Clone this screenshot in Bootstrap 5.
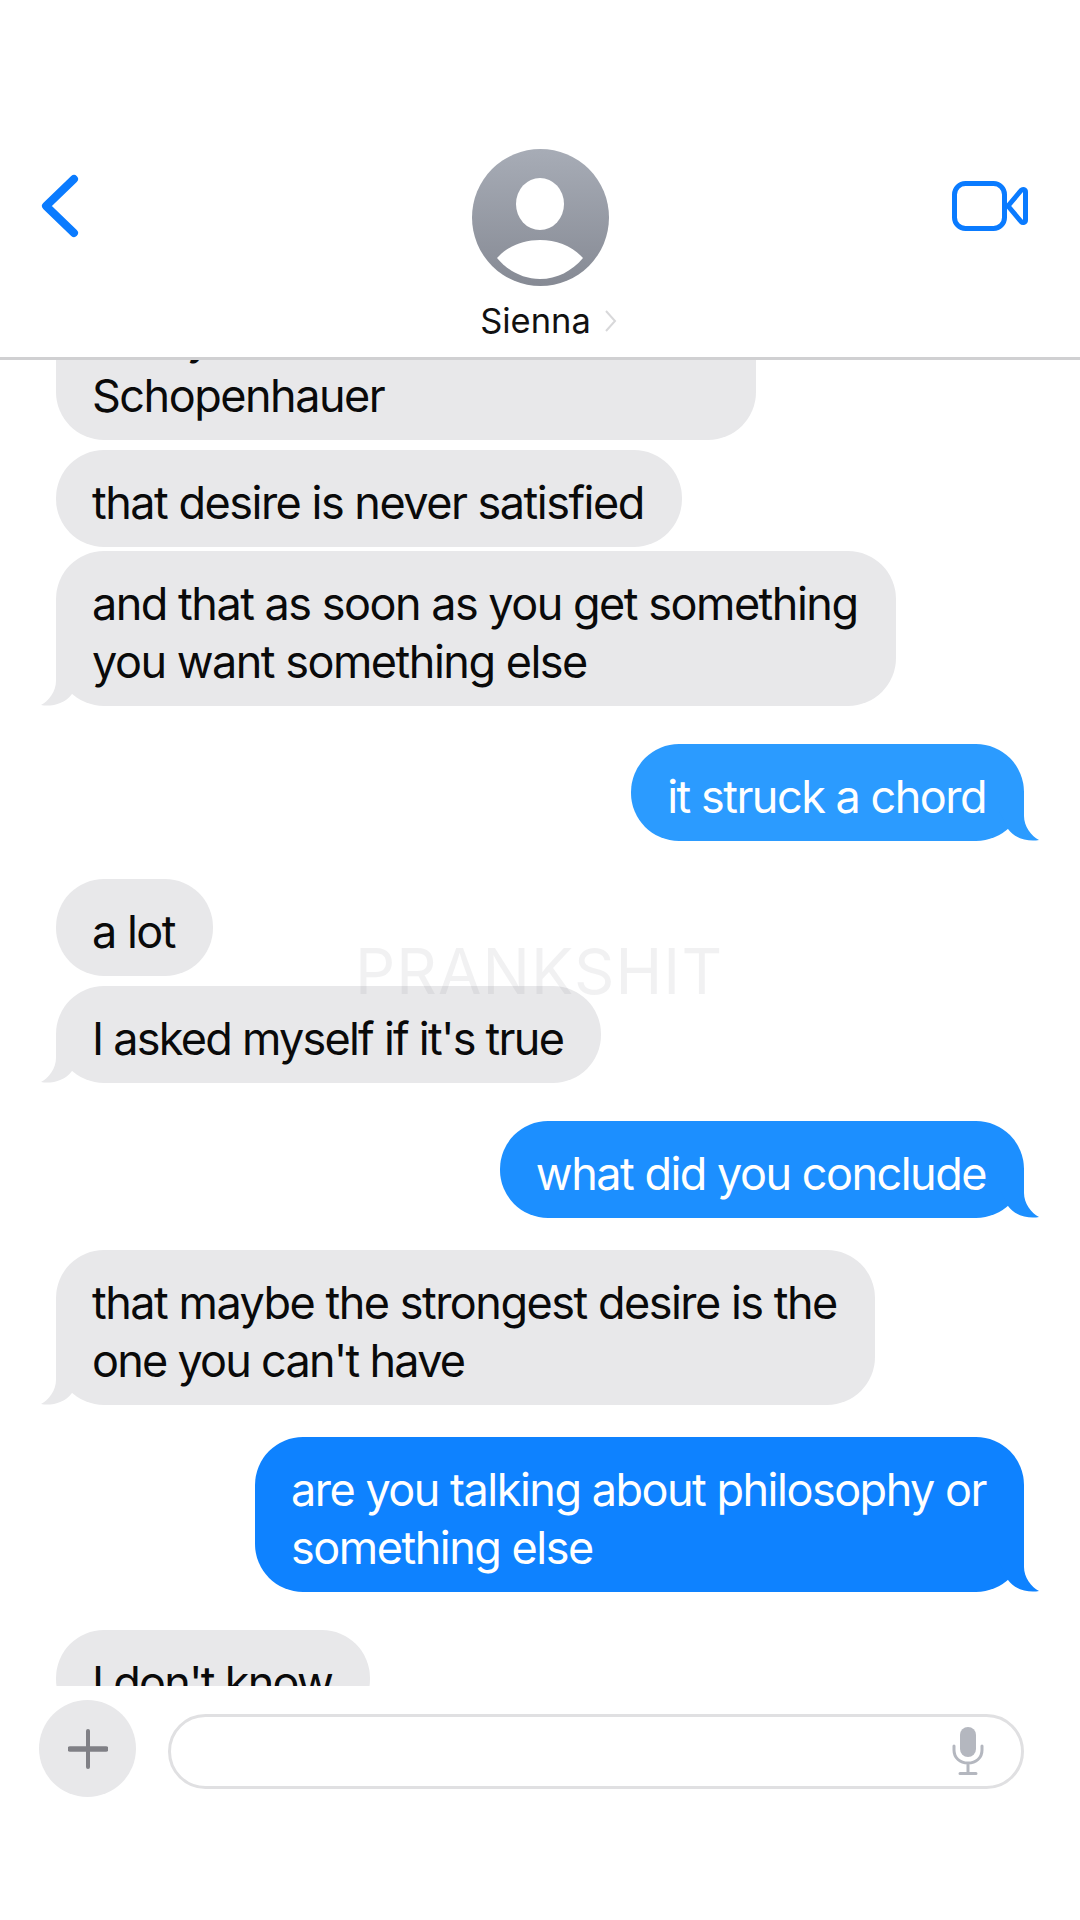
<!DOCTYPE html>
<html>
<head>
    <meta charset="UTF-8">
    <title>Sienna</title>
    <link href="https://cdn.jsdelivr.net/npm/bootstrap@5.3.0/dist/css/bootstrap.min.css" rel="stylesheet">
    <style>
        html, body {
            background-color: #fff;
        }
        .phone-screen {
            width: 1080px;
            height: 1920px;
            overflow: hidden;
            position: relative;
            font-family: Inter, "Liberation Sans", sans-serif;
        }
        .chat-head {
            height: 360px;
            padding-top: 149px;
            border-bottom: 3px solid #d0d0d2;
        }
        .back-icon {
            left: 40px;
            top: 172px;
        }
        .video-icon {
            right: 50px;
            top: 178px;
        }
        .contact-pic {
            width: 137px;
            height: 137px;
        }
        .contact-name {
            font-size: 34.5px;
            line-height: 40px;
            margin-top: 15px;
            color: #111;
            padding-left: 17px;
            gap: 13px;
        }
        .thread {
            height: 1326px;
            overflow: hidden;
            padding: 0 56px;
        }
        .bubble {
            font-size: 45px;
            line-height: 58px;
            letter-spacing: -1.5px;
            padding: 24px 38px 15px 36px;
            border-radius: 48px;
            position: relative;
        }
        .bubble-in {
            background-color: #e8e8ea;
            color: #0a0a0a;
            align-self: flex-start;
        }
        .bubble-out {
            color: #fff;
            align-self: flex-end;
        }
        .snug { letter-spacing: -1.75px; }
        .blue-1 { background-color: #2b9bff; color: #fff; }
        .blue-2 { background-color: #1c8fff; color: #fff; }
        .blue-3 { background-color: #0e82ff; color: #fff; }
        .tail {
            position: absolute;
            bottom: 0;
            width: 40px;
            height: 50px;
        }
        .bubble-in .tail {
            left: -15px;
            color: #e8e8ea;
        }
        .bubble-out .tail {
            right: -15px;
            transform: scaleX(-1);
        }
        .blue-1 .tail { color: #2b9bff; }
        .blue-2 .tail { color: #1c8fff; }
        .blue-3 .tail { color: #0e82ff; }
        .gap-s { margin-top: 10px; }
        .gap-xs { margin-top: 4px; }
        .gap-m { margin-top: 32px; }
        .gap-l { margin-top: 38px; }
        .first-bubble {
            margin-top: -75px;
            width: 700px;
        }
        .composer {
            padding: 14px 56px 0 39px;
        }
        .add-btn {
            width: 97px;
            height: 97px;
            background-color: #e8e8ea;
            flex: none;
        }
        .msg-field {
            height: 75px;
            margin-left: 32px;
            margin-top: 5px;
            border: 3px solid #e0e0e2;
            border-radius: 38px;
            padding-right: 36px;
        }
        .watermark {
            left: 355px;
            top: 936px;
            font-size: 63px;
            line-height: 70px;
            letter-spacing: 1.1px;
            color: rgba(120, 120, 125, 0.1);
            pointer-events: none;
        }
    </style>
</head>
<body>
    <svg width="0" height="0" class="position-absolute">
        <symbol id="tailShape" viewBox="0 0 40 50">
            <path d="M15 0 V25 C15 35 8 45 0 49 C10 51 24 48 31 38 L40 20 V0 Z" fill="currentColor"/>
        </symbol>
    </svg>

    <div class="phone-screen">
        <div class="chat-head d-flex flex-column align-items-center">
            <svg class="back-icon position-absolute" width="40" height="68" viewBox="0 0 40 68">
                <path d="M34 7 L6 34 L34 61" fill="none" stroke="#0a7bff" stroke-width="8" stroke-linecap="round" stroke-linejoin="round"/>
            </svg>
            <svg class="contact-pic" viewBox="0 0 137 137">
                <defs>
                    <linearGradient id="picGrad" x1="0" y1="0" x2="0" y2="1">
                        <stop offset="0" stop-color="#a7acb6"/>
                        <stop offset="1" stop-color="#868a94"/>
                    </linearGradient>
                </defs>
                <circle cx="68.5" cy="68.5" r="68.5" fill="url(#picGrad)"/>
                <ellipse cx="68" cy="55" rx="24" ry="26" fill="#fff"/>
                <path d="M25 109 C36 97 51 91 68 91 C85 91 100 97 111 109 C100 122 85 130 68 130 C51 130 36 122 25 109 Z" fill="#fff"/>
            </svg>
            <div class="contact-name d-flex align-items-center">
                <span>Sienna</span>
                <svg width="13" height="24" viewBox="0 0 13 24">
                    <path d="M2 2 L11 12 L2 22" fill="none" stroke="#d8d8da" stroke-width="2"/>
                </svg>
            </div>
            <svg class="video-icon position-absolute" width="80" height="58" viewBox="0 0 80 58">
                <rect x="4.5" y="5.5" width="50" height="45" rx="11" fill="none" stroke="#0a7bff" stroke-width="5"/>
                <path d="M58 28 L71 12.5 C73 10.5 75.5 11.5 75.5 14 V42 C75.5 44.5 73 45.5 71 43.5 Z" fill="none" stroke="#0a7bff" stroke-width="5" stroke-linejoin="round"/>
            </svg>
        </div>

        <div class="thread d-flex flex-column">
            <div class="bubble bubble-in first-bubble">Lately I read<br>Schopenhauer</div>
            <div class="bubble bubble-in gap-s">that desire is never satisfied</div>
            <div class="bubble bubble-in gap-xs">and that as soon as you get something<br>you want something else
                <svg class="tail"><use href="#tailShape"/></svg>
            </div>
            <div class="bubble bubble-out blue-1 gap-l">it struck a chord
                <svg class="tail"><use href="#tailShape"/></svg>
            </div>
            <div class="bubble bubble-in gap-l">a lot</div>
            <div class="bubble bubble-in gap-s snug">I asked myself if it's true
                <svg class="tail"><use href="#tailShape"/></svg>
            </div>
            <div class="bubble bubble-out blue-2 gap-l">what did you conclude
                <svg class="tail"><use href="#tailShape"/></svg>
            </div>
            <div class="bubble bubble-in gap-m">that maybe the strongest desire is the<br><span class="snug">one you can't have</span>
                <svg class="tail"><use href="#tailShape"/></svg>
            </div>
            <div class="bubble bubble-out blue-3 gap-m">are you talking about philosophy or<br>something else
                <svg class="tail"><use href="#tailShape"/></svg>
            </div>
            <div class="bubble bubble-in gap-l snug">I don't know</div>
        </div>

        <div class="composer d-flex align-items-center">
            <div class="add-btn rounded-circle d-flex align-items-center justify-content-center">
                <svg width="40" height="40" viewBox="0 0 40 40">
                    <path d="M20 2 V38" stroke="#808086" stroke-width="4" stroke-linecap="round"/>
                    <path d="M2 20 H38" stroke="#808086" stroke-width="5.5" stroke-linecap="round"/>
                </svg>
            </div>
            <div class="msg-field flex-grow-1 d-flex align-items-center justify-content-end">
                <svg width="34" height="50" viewBox="0 0 34 50">
                    <rect x="9" y="1" width="16" height="30" rx="8" fill="#b4b7bf"/>
                    <path d="M3 20 V24 C3 32 9 37 17 37 C25 37 31 32 31 24 V20 M17 37 V47 M9 47.5 H25" fill="none" stroke="#b4b7bf" stroke-width="3" stroke-linecap="round"/>
                </svg>
            </div>
        </div>

        <div class="watermark position-absolute">PRANKSHIT</div>
    </div>

    <script src="https://cdn.jsdelivr.net/npm/bootstrap@5.3.0/dist/js/bootstrap.bundle.min.js"></script>
</body>
</html>
